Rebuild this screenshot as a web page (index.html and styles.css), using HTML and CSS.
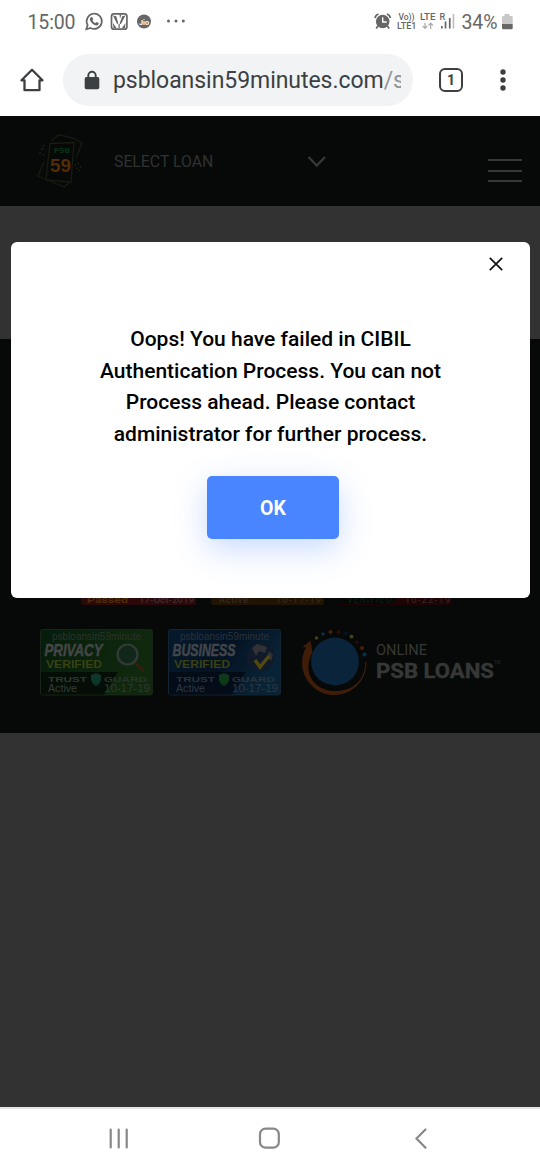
FILE: index.html
```html
<!DOCTYPE html>
<html lang="en">
<head>
<meta charset="utf-8">
<meta name="viewport" content="width=device-width, initial-scale=1">
<title>PSB Loans in 59 Minutes</title>
<link rel="stylesheet" href="styles.css">
</head>
<body>
<div class="phone">
  <div class="status">
    <svg width="540" height="44" viewBox="0 0 540 44" fill="#666">
      <text x="27.500" y="29" font-size="19.500" textLength="48">15:00</text>
      <g fill="none" stroke="#666" stroke-width="1.700">
        <path d="M86.300 29.200l1.300-4.200a7.600 7.600 0 1 1 2.900 2.900z"/>
        <rect x="111.500" y="13.800" width="15.400" height="15.400" rx="2.500"/>
      </g>
      <path d="M90.500 17.500q1.300-1.300 2.200.4l.5 1.400-.8 1.200q1 1.900 3 2.700l1.300-1.100 2 .9q.4 1.500-1.200 2.200c-3 1.200-8-3.600-7.600-6.200zM113 15.500l3.300.7 2 7.300-1.200.5zM125.500 15.500l-3.300.7-2.600 7.300 1.200.8zM118.500 24h1.200v4h-1.200zM113 23l3.500 5h-3zM125.500 23l-3.500 5h3zM119.500 14.500h2l-1.500 4z"/>
      <circle cx="144" cy="21.500" r="7"/>
      <text x="139" y="24.500" font-size="8" font-weight="700" fill="#fff" textLength="10" lengthAdjust="spacingAndGlyphs">Jio</text>
      <circle cx="168.500" cy="21" r="1.500"/><circle cx="176" cy="21" r="1.500"/><circle cx="183.300" cy="21" r="1.500"/>
      <circle cx="382.700" cy="21.500" r="6.800"/>
      <path d="M375 18q.5-3 3.500-4M390.400 18q-.5-3-3.500-4M378 26l-1.800 2.500M387.400 26l1.800 2.500" fill="none" stroke="#666" stroke-width="1.700"/>
      <path d="M382.700 17.300v4.700h4" fill="none" stroke="#fff" stroke-width="1.400"/>
      <g font-weight="500" font-size="9">
        <text x="398.500" y="19.500" textLength="16" lengthAdjust="spacingAndGlyphs">Vo))</text>
        <text x="397" y="28.500" textLength="19.500" lengthAdjust="spacingAndGlyphs">LTE1</text>
        <text x="420" y="19.500" textLength="15.500" lengthAdjust="spacingAndGlyphs">LTE</text>
        <text x="439.500" y="19.500">R</text>
      </g>
      <path d="M425 23v5m-2.200-2l2.200 2.300 2.200-2.300M430.700 29v-5.500m-2.200 2l2.200-2.300 2.200 2.300" fill="none" stroke="#aaa" stroke-width="1.200"/>
      <path d="M441 26h1.700v2.500H441zM444.700 21.500h1.700v7h-1.700zM448.900 18h1.700v10.500h-1.700z"/><path fill="#bbb" d="M452.700 14h1.600v14.500h-1.600z"/>
      <text x="461.500" y="29" font-size="19.500" textLength="36">34%</text>
      <path d="M504.500 14h5v2h2q1.200 0 1.200 1.200v6.800h-10.700v-6.800q0-1.200 1.200-1.200h1.300z" fill="#c8c8c8"/>
      <path d="M502 24h10.700v4q0 1.200-1.200 1.200h-8.300q-1.200 0-1.200-1.200z"/>
    </svg>
  </div>
  <div class="browser">
    <svg class="home" width="24" height="24" viewBox="0 0 24 24"><path d="M12 1.800L1.500 12.300H4.500V22.200H19.500V12.300H22.500Z" fill="none" stroke="#3c4043" stroke-width="2.300" stroke-linejoin="round"/></svg>
    <div class="address">
      <svg width="16" height="20" viewBox="0 0 16 20"><path d="M4.300 8V5.500a3.700 3.700 0 0 1 7.400 0V8" fill="none" stroke="#3c4043" stroke-width="1.900"/><rect x=".7" y="7" width="14.600" height="12.200" rx="1.700" fill="#3c4043"/></svg>
      <div class="url">psbloansin59minutes.com<span>/s</span></div>
    </div>
    <div class="tabs">1</div>
    <svg class="more" width="8" height="24" viewBox="0 0 8 24" fill="#3c4043"><circle cx="4" cy="4" r="2.700"/><circle cx="4" cy="12" r="2.700"/><circle cx="4" cy="20" r="2.700"/></svg>
  </div>
  <main class="page">
    <header class="site-header">
      <svg class="logo" width="48" height="60" viewBox="0 0 48 60">
        <g fill="none" stroke="#181b10" stroke-width="1.300"><path d="M13 10.500L37 9.500 34 49 9 47z"/><path d="M14 8L22 1.500 37 5.500 45 10 39 25M7 29L1 43 27 54 33 49"/></g>
        <g fill="none" stroke="#202317" stroke-width="1.500" stroke-dasharray="1.500 2.500"><path d="M7 12L3 20 8 22M5 15L9 17M41 30L44 35 40 40M38 31L41 38"/></g>
        <g font-family="Liberation Sans" font-weight="700"><text x="17" y="19.500" font-size="7.500" fill="#07341a" textLength="16">PSB</text>
        <text x="13" y="39" font-size="18" fill="#512d06" textLength="21" lengthAdjust="spacingAndGlyphs">59</text></g>
      </svg>
      <div class="loan-select">SELECT LOAN</div>
      <svg class="chevron" width="20" height="14" viewBox="0 0 20 14"><path d="M1.500 2L9.800 10.500 18 2" fill="none" stroke="#363837" stroke-width="2.300"/></svg>
      <div class="burger"><i></i><i></i><i></i></div>
    </header>
    <section class="banner"></section>
    <footer class="site-footer">
      <div class="strip">
        <svg width="372" height="9" viewBox="0 0 372 9" font-size="9">
          <path d="M0 0H115V5q0 2-2 2H3Q0 7 0 4z" fill="#2c080b"/><text x="6" y="5" fill="#4b2b08" font-weight="700" textLength="41" lengthAdjust="spacingAndGlyphs">Passed</text><text x="58" y="5" fill="#3d2a2a" font-weight="700" textLength="55" lengthAdjust="spacingAndGlyphs">17-Oct-2019</text>
          <path d="M130 0H243V5q0 2-2 2H133Q130 7 130 4z" fill="#211405"/><text x="138" y="5" fill="#383125" textLength="29">Active</text><text x="195" y="5" fill="#392f19" textLength="45">10-17-19</text>
          <path d="M258 0H371V5q0 2-2 2H261Q258 7 258 4z" fill="#1d0506"/><path d="M259 0H316L309 6H259z" fill="#060706"/><text x="266" y="5" fill="#0a2511" textLength="45">VERIFIED</text><text x="324" y="5" fill="#3a2929" textLength="45">10-22-19</text>
        </svg>
      </div>
      <div class="seals">
        <svg class="seal" width="113" height="67" viewBox="0 0 113 67" font-family="Liberation Sans">
          <defs><linearGradient id="green" x2="1" y2=".2"><stop stop-color="#061c0b"/><stop offset="1" stop-color="#10290e"/></linearGradient></defs>
          <rect x=".5" y=".5" width="112" height="65.500" rx="2" fill="url(#green)" stroke="#18241a"/><path d="M1 43H78L64 65.500H1z" fill="#040e06"/>
          <text x="12" y="11" font-size="10" fill="#29332a" textLength="89" lengthAdjust="spacingAndGlyphs">psbloansin59minute</text>
          <text x="4.500" y="27" font-size="17" font-weight="700" font-style="italic" fill="#434646" stroke="#434646" stroke-width=".5" textLength="58" lengthAdjust="spacingAndGlyphs">PRIVACY</text>
          <text x="6" y="38.500" font-size="11" font-weight="700" fill="#394213" textLength="56" lengthAdjust="spacingAndGlyphs">VERIFIED</text>
          <path d="M95 34L104 42" stroke="#35200f" stroke-width="2.500"/><circle cx="87.500" cy="25.500" r="10" fill="#11271a" stroke="#343a38" stroke-width="2.200"/>
          <text x="8" y="53" font-size="7" font-weight="700" fill="#303731" textLength="39" lengthAdjust="spacingAndGlyphs">TRUST</text><path d="M51 46L56 44 61 46V51Q60 55 56 57 52 55 51 51z" fill="#0e3529"/><text x="64" y="53" font-size="7" font-weight="700" fill="#2b342c" textLength="43" lengthAdjust="spacingAndGlyphs">GUARD</text>
          <text x="8" y="63" font-size="10" fill="#343d35" textLength="29" lengthAdjust="spacingAndGlyphs">Active</text><text x="64" y="63" font-size="10" fill="#303830" textLength="46" lengthAdjust="spacingAndGlyphs">10-17-19</text>
        </svg>
        <svg class="seal" width="113" height="67" viewBox="0 0 113 67" font-family="Liberation Sans">
          <defs><linearGradient id="blue" x2="1" y2=".4"><stop stop-color="#061a2b"/><stop offset=".55" stop-color="#041222"/><stop offset="1" stop-color="#092336"/></linearGradient></defs>
          <rect x=".5" y=".5" width="112" height="65.500" rx="2" fill="url(#blue)" stroke="#122331"/><path d="M1 43H78L64 65.500H1z" fill="#030c17"/>
          <text x="12" y="11" font-size="10" fill="#27323c" textLength="89" lengthAdjust="spacingAndGlyphs">psbloansin59minute</text>
          <text x="4.500" y="27" font-size="17" font-weight="700" font-style="italic" fill="#42464b" stroke="#42464b" stroke-width=".5" textLength="63" lengthAdjust="spacingAndGlyphs">BUSINESS</text>
          <text x="6" y="38.500" font-size="11" font-weight="700" fill="#394115" textLength="56" lengthAdjust="spacingAndGlyphs">VERIFIED</text>
          <circle cx="92.500" cy="28" r="14" fill="#101a2a"/><path d="M84 19L89 15 99 18 97 24 91 22 88 27zM101 22l4 4-2 6-4-4z" fill="#303236"/><path d="M87 31L92 38 101 27" fill="none" stroke="#51490f" stroke-width="3.500"/>
          <text x="8" y="53" font-size="7" font-weight="700" fill="#28333c" textLength="39" lengthAdjust="spacingAndGlyphs">TRUST</text><path d="M51 46L56 44 61 46V51Q60 55 56 57 52 55 51 51z" fill="#0e3919"/><text x="64" y="53" font-size="7" font-weight="700" fill="#28333c" textLength="43" lengthAdjust="spacingAndGlyphs">GUARD</text>
          <text x="8" y="63" font-size="10" fill="#2e3944" textLength="29" lengthAdjust="spacingAndGlyphs">Active</text><text x="64" y="63" font-size="10" fill="#2c3741" textLength="46" lengthAdjust="spacingAndGlyphs">10-17-19</text>
        </svg>
        <svg class="brand" width="201" height="68" viewBox="0 0 201 68">
          <circle cx="34" cy="32.500" r="23.900" fill="#0a253b"/>
          <path d="M9.500 11.500L11.500 23C0 44 14 62 34 62C53 62 64.500 50 64.300 33L65.500 33A32.200 32.200 0 1 1 5 18.500L1.500 18z" fill="#401d09"/>
          <circle cx="15.500" cy="9" r="1.800" fill="#454012"/><circle cx="22" cy="5" r="1.700" fill="#0c3346"/><circle cx="29.500" cy="3" r="2" fill="#491d09"/><circle cx="37.500" cy="3" r="1.900" fill="#300908"/><circle cx="45" cy="4.500" r="1.700" fill="#06172a"/><circle cx="50.500" cy="7.500" r="2" fill="#454012"/><circle cx="56" cy="13" r="1.800" fill="#2b0910"/><circle cx="61" cy="19" r="2" fill="#482009"/><circle cx="63.500" cy="25.500" r="2" fill="#0c3345"/>
          <text x="75" y="26" font-size="13.800" fill="#363837" textLength="51" lengthAdjust="spacingAndGlyphs">ONLINE</text>
          <text x="75" y="49" font-size="20" font-weight="700" fill="#363737" stroke="#363737" stroke-width=".4" textLength="118" lengthAdjust="spacingAndGlyphs">PSB LOANS</text>
          <text x="193" y="35" font-size="4.500" fill="#282a2a" textLength="6.500">TM</text>
        </svg>
      </div>
    </footer>
    <div class="modal" role="dialog">
      <svg class="close" width="14" height="14" viewBox="0 0 14 14"><path d="M.8.800L13.200 13.200M13.200.800L.8 13.200" stroke="#111" stroke-width="1.700"/></svg>
      <p>Oops! You have failed in CIBIL<br>Authentication Process. You can not<br>Process ahead. Please contact<br>administrator for further process.</p>
      <button class="ok">OK</button>
    </div>
  </main>
  <nav class="navbar">
    <svg width="540" height="61" viewBox="0 0 540 61" fill="none" stroke="#888" stroke-width="2.200" stroke-linecap="round"><path d="M110.700 20.500V38.500M118.700 20.500V38.500M126.700 20.500V38.500M425.500 20.500L416.500 29.500 425.500 38.800"/><rect x="260" y="19.700" width="18.800" height="19" rx="5.500"/></svg>
  </nav>
</div>
</body>
</html>
```

FILE: styles.css
```css
* { box-sizing: border-box; }
body { margin: 0; font-family: Roboto, "Liberation Sans", sans-serif; background: #fff; }
svg { display: block; flex: none; }
.phone { width: 540px; height: 1170px; display: flex; flex-direction: column; overflow: hidden; }
.status { height: 44px; }
.browser { height: 72px; display: flex; align-items: center; padding: 0 33px 1px 20px; }
.home { margin-right: 19px; }
.address { width: 350px; height: 52px; border-radius: 26px; background: #f1f3f4; display: flex; align-items: center; padding: 0 12px 0 21px; gap: 13px; }
.url { flex: 1; min-width: 0; overflow: hidden; white-space: nowrap; padding-top: 2px; font-size: 23px; line-height: 32px; letter-spacing: -.05px; color: #3c4043; }
.url span { color: #909497; }
.tabs { width: 24px; height: 24px; margin-left: 26px; border: 2.5px solid #3c4043; border-radius: 6px; font-size: 14px; font-weight: 700; line-height: 20px; text-align: center; color: #3c4043; }
.more { margin-left: auto; }
.page { position: relative; height: 991px; background: #323232; display: flex; flex-direction: column; }
.site-header { height: 90px; background: #060908; display: flex; align-items: flex-start; padding: 17px 18px 0 37px; }
.loan-select { width: 175px; padding: 20px 0 0 29px; font-size: 15.8px; line-height: 18px; color: #303231; white-space: nowrap; }
.chevron { margin: 22px 0 0 47px; }
.burger { margin: 26px 0 0 auto; width: 34px; display: flex; flex-direction: column; gap: 8.5px; }
.burger i { height: 2px; background: #353736; }
.banner { height: 133px; }
.site-footer { height: 394px; background: #060908; display: flex; flex-direction: column; padding-top: 259px; }
.strip { padding-left: 81px; }
.seals { display: flex; padding: 22px 0 0 40px; }
.seal { margin-right: 15px; }
.brand { margin-left: 5px; }
.modal { position: absolute; left: 11px; top: 126px; width: 519px; height: 356px; border-radius: 6px; background: #fff; display: flex; flex-direction: column; align-items: center; }
.close { margin: 15px 27px 0 auto; }
.modal p { margin: 53px 0 0; font-size: 21px; line-height: 31.5px; font-weight: 500; color: #000; text-align: center; white-space: nowrap; }
.ok { width: 132px; height: 63px; margin: 26px 0 0 5px; padding-top: 2px; border: 0; border-radius: 5px; background: #4885ff; color: #fff; font: 700 19.5px Roboto, sans-serif; box-shadow: 0 10px 32px rgba(72, 133, 255, .3); }
.navbar { height: 63px; border-top: 2px solid #e4e4e4; background: #fff; }
```
